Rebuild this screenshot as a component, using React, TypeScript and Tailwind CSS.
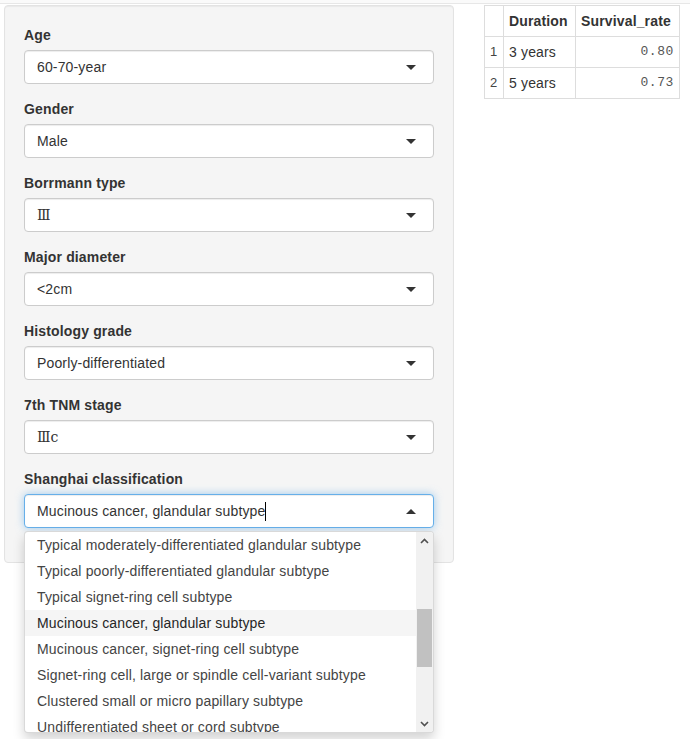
import React from 'react';

const fields = [
  { label: 'Age', value: '60-70-year' },
  { label: 'Gender', value: 'Male' },
  { label: 'Borrmann type', value: 'Ⅲ', serif: true },
  { label: 'Major diameter', value: '<2cm' },
  { label: 'Histology grade', value: 'Poorly-differentiated' },
  { label: '7th TNM stage', value: 'Ⅲc', serif: true },
];

const options = [
  'Typical moderately-differentiated glandular subtype',
  'Typical poorly-differentiated glandular subtype',
  'Typical signet-ring cell subtype',
  'Mucinous cancer, glandular subtype',
  'Mucinous cancer, signet-ring cell subtype',
  'Signet-ring cell, large or spindle cell-variant subtype',
  'Clustered small or micro papillary subtype',
  'Undifferentiated sheet or cord subtype',
];

const rows = [
  { n: 1, duration: '3 years', rate: '0.80' },
  { n: 2, duration: '5 years', rate: '0.73' },
];

function Caret({ up }: { up?: boolean }) {
  return (
    <span
      className={
        up
          ? 'w-0 h-0 border-x-[5px] border-x-transparent border-b-[5px] border-b-[#333]'
          : 'w-0 h-0 border-x-[5px] border-x-transparent border-t-[5px] border-t-[#333]'
      }
    />
  );
}

function Select({ value, serif }: { value: string; serif?: boolean }) {
  return (
    <div className="flex items-center justify-between h-[34px] pl-[12px] pr-[17px] bg-white border border-[#ccc] rounded-[4px] shadow-[inset_0_1px_1px_rgba(0,0,0,0.075)]">
      <span
        className={
          serif
            ? "font-['DejaVu_Serif','Liberation_Serif',serif] tracking-normal text-[14px] text-[#333] leading-[20px]"
            : 'text-[14px] text-[#333] leading-[20px]'
        }
      >
        {value}
      </span>
      <Caret />
    </div>
  );
}

function Chevron({ up }: { up?: boolean }) {
  return (
    <svg width="9" height="6" viewBox="0 0 9 6" fill="none">
      <path
        d={up ? 'M1 5 L4.5 1.5 L8 5' : 'M1 1 L4.5 4.5 L8 1'}
        stroke="#505050"
        strokeWidth="1.6"
      />
    </svg>
  );
}

export default function App() {
  return (
    <div className="min-h-screen bg-white font-['Liberation_Sans',Arial,sans-serif] tracking-[0.15px] text-[14px] text-[#333]">
      <div className="h-[4px] bg-[#fafafa] border-b border-[#e7e7e7]" />
      <div className="flex items-start pl-[4px] pt-[1px]">
        <div className="w-[450px] bg-[#f5f5f5] border border-[#e3e3e3] rounded-[4px] p-[19px] shadow-[inset_0_1px_1px_rgba(0,0,0,0.05)]">
          {fields.map((f) => (
            <div key={f.label} className="mb-[15px]">
              <div className="font-bold leading-[20px] mb-[5px]">{f.label}</div>
              <Select value={f.value} serif={f.serif} />
            </div>
          ))}
          <div className="mb-[15px] relative">
            <div className="font-bold leading-[20px] mb-[5px]">Shanghai classification</div>
            <div className="flex items-center justify-between h-[34px] pl-[12px] pr-[17px] bg-white border border-[#66afe9] rounded-[4px] shadow-[inset_0_1px_1px_rgba(0,0,0,0.075),0_0_8px_rgba(102,175,233,0.6)]">
              <span className="flex items-center leading-[20px]">
                Mucinous cancer, glandular subtype
                <span className="w-px h-[19px] bg-black" />
              </span>
              <Caret up />
            </div>
            <div className="absolute left-0 right-0 top-[62px] z-10 h-[202px] flex bg-white border border-[rgba(0,0,0,0.15)] rounded-[4px] shadow-[0_6px_12px_rgba(0,0,0,0.175)] overflow-hidden">
              <div className="flex-1 overflow-hidden">
                {options.map((o, i) => (
                  <div
                    key={o}
                    className={
                      i === 3
                        ? 'px-[12px] py-[3px] leading-[20px] whitespace-nowrap bg-[#f5f5f5] text-[#262626]'
                        : 'px-[12px] py-[3px] leading-[20px] whitespace-nowrap text-[#444]'
                    }
                  >
                    {o}
                  </div>
                ))}
              </div>
              <div className="w-[17px] bg-[#f1f1f1] flex flex-col items-center">
                <div className="h-[17px] flex items-center justify-center">
                  <Chevron up />
                </div>
                <div className="flex-1 w-full px-[1px] pt-[60px]">
                  <div className="h-[58px] bg-[#c1c1c1]" />
                </div>
                <div className="h-[17px] flex items-center justify-center">
                  <Chevron />
                </div>
              </div>
            </div>
          </div>
        </div>

        <table className="ml-[30px] border-collapse border border-[#ddd] leading-[20px]">
          <thead>
            <tr>
              <th className="w-[19px] border border-[#ddd] p-[5px]" />
              <th className="w-[72px] border border-[#ddd] p-[5px] text-left font-bold">Duration</th>
              <th className="w-[104px] border border-[#ddd] p-[5px] text-left font-bold">Survival_rate</th>
            </tr>
          </thead>
          <tbody>
            {rows.map((r) => (
              <tr key={r.n}>
                <td className="border border-[#ddd] p-[5px] text-[13px] text-[#444]">{r.n}</td>
                <td className="border border-[#ddd] p-[5px]">{r.duration}</td>
                <td className="border border-[#ddd] p-[5px] text-right font-['Liberation_Mono',monospace] tracking-[0.6px] text-[13px] text-[#555]">
                  {r.rate}
                </td>
              </tr>
            ))}
          </tbody>
        </table>
      </div>
    </div>
  );
}
